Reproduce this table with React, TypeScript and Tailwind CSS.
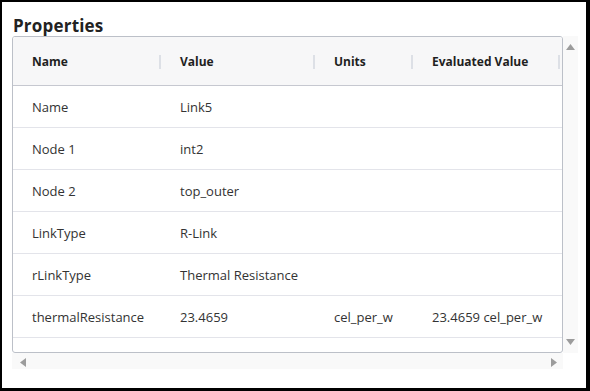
import React from "react";

const rows = [
  { name: "Name", value: "Link5", units: "", evaluated: "" },
  { name: "Node 1", value: "int2", units: "", evaluated: "" },
  { name: "Node 2", value: "top_outer", units: "", evaluated: "" },
  { name: "LinkType", value: "R-Link", units: "", evaluated: "" },
  { name: "rLinkType", value: "Thermal Resistance", units: "", evaluated: "" },
  { name: "thermalResistance", value: "23.4659", units: "cel_per_w", evaluated: "23.4659 cel_per_w" },
];

const cols = [
  { key: "name", label: "Name", width: "w-[148px]" },
  { key: "value", label: "Value", width: "w-[154px]" },
  { key: "units", label: "Units", width: "w-[98px]" },
  { key: "evaluated", label: "Evaluated Value", width: "w-[147px]" },
] as const;

function Arrow({ dir }: { dir: "up" | "down" | "left" | "right" }) {
  const points = {
    up: "0,6 4.5,0 9,6",
    down: "0,0 9,0 4.5,6",
    left: "6,0 6,9 0,4.5",
    right: "0,0 6,4.5 0,9",
  }[dir];
  const vertical = dir === "up" || dir === "down";
  return (
    <svg width={vertical ? 9 : 6} height={vertical ? 6 : 9} viewBox={vertical ? "0 0 9 6" : "0 0 6 9"}>
      <polygon points={points} fill="#9c9c9c" />
    </svg>
  );
}

export default function App() {
  return (
    <div
      className="box-border h-[391px] w-[590px] border-b-[3px] border-l-2 border-r-4 border-t-2 border-black bg-white pl-[10px] pt-[14px] text-[#333]"
      style={{ fontFamily: '"Open Sans", "Noto Sans", sans-serif' }}
    >
      <div className="h-[20px] pl-[1px] text-[17px] font-bold leading-[20px] tracking-[0.2px] text-[#222]">Properties</div>
      <div className="flex">
        <div className="flex flex-col">
          <div className="box-border h-[317px] w-[551px] overflow-hidden rounded-[3px] border border-[#bcc0c8]">
            <div className="w-[700px]">
              <div className="flex h-[49px] items-center border-b border-[#c6c8d0] bg-[#f7f7f8] pt-[1px] text-[12px] font-bold text-[#1f1f1f]">
                {cols.map((c) => (
                  <div key={c.key} className={`${c.width} flex shrink-0 items-center justify-between pl-[19px]`}>
                    <span>{c.label}</span>
                    <span className="h-[14px] w-[2px] bg-[#dde0e6]" />
                  </div>
                ))}
                <div className="w-[100px] shrink-0" />
              </div>
              {rows.map((r) => (
                <div key={r.name} className="flex h-[42px] items-center border-b border-[#e3e4ea] pt-[3px] text-[13px]">
                  {cols.map((c) => (
                    <div key={c.key} className={`${c.width} shrink-0 whitespace-nowrap pl-[19px]`}>
                      {r[c.key]}
                    </div>
                  ))}
                </div>
              ))}
            </div>
          </div>
          <div className="flex h-[16px] w-[551px] items-center justify-between bg-[#f9f9f9] pl-[8px] pr-[6px] pt-[2px]">
            <Arrow dir="left" />
            <Arrow dir="right" />
          </div>
        </div>
        <div className="flex h-[317px] w-[15px] flex-col items-center justify-between bg-[#f9f9f9] py-[8px]">
          <Arrow dir="up" />
          <Arrow dir="down" />
        </div>
      </div>
    </div>
  );
}
